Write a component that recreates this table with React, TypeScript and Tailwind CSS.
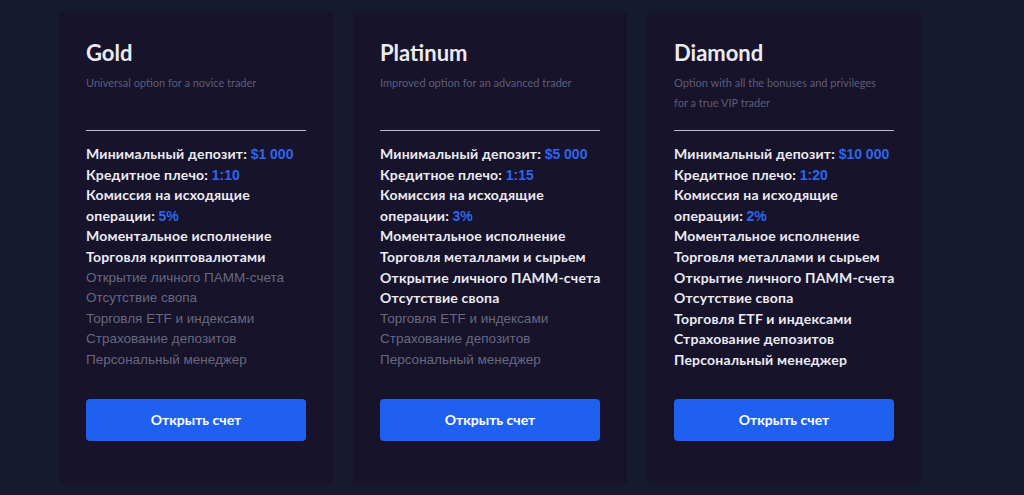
import React from 'react';

type Feature = { label: string; value?: string; active: boolean };

type Plan = {
  name: string;
  subtitle: string[];
  features: Feature[];
};

const plans: Plan[] = [
  {
    name: 'Gold',
    subtitle: ['Universal option for a novice trader'],
    features: [
      { label: 'Минимальный депозит:', value: '$1 000', active: true },
      { label: 'Кредитное плечо:', value: '1:10', active: true },
      { label: 'Комиссия на исходящие\nоперации:', value: '5%', active: true },
      { label: 'Моментальное исполнение', active: true },
      { label: 'Торговля криптовалютами', active: true },
      { label: 'Открытие личного ПАММ-счета', active: false },
      { label: 'Отсутствие свопа', active: false },
      { label: 'Торговля ETF и индексами', active: false },
      { label: 'Страхование депозитов', active: false },
      { label: 'Персональный менеджер', active: false },
    ],
  },
  {
    name: 'Platinum',
    subtitle: ['Improved option for an advanced trader'],
    features: [
      { label: 'Минимальный депозит:', value: '$5 000', active: true },
      { label: 'Кредитное плечо:', value: '1:15', active: true },
      { label: 'Комиссия на исходящие\nоперации:', value: '3%', active: true },
      { label: 'Моментальное исполнение', active: true },
      { label: 'Торговля металлами и сырьем', active: true },
      { label: 'Открытие личного ПАММ-счета', active: true },
      { label: 'Отсутствие свопа', active: true },
      { label: 'Торговля ETF и индексами', active: false },
      { label: 'Страхование депозитов', active: false },
      { label: 'Персональный менеджер', active: false },
    ],
  },
  {
    name: 'Diamond',
    subtitle: ['Option with all the bonuses and privileges', 'for a true VIP trader'],
    features: [
      { label: 'Минимальный депозит:', value: '$10 000', active: true },
      { label: 'Кредитное плечо:', value: '1:20', active: true },
      { label: 'Комиссия на исходящие\nоперации:', value: '2%', active: true },
      { label: 'Моментальное исполнение', active: true },
      { label: 'Торговля металлами и сырьем', active: true },
      { label: 'Открытие личного ПАММ-счета', active: true },
      { label: 'Отсутствие свопа', active: true },
      { label: 'Торговля ETF и индексами', active: true },
      { label: 'Страхование депозитов', active: true },
      { label: 'Персональный менеджер', active: true },
    ],
  },
];

function PlanCard({ plan }: { plan: Plan }) {
  return (
    <div className="w-[274px] h-[471px] bg-[#16132b] px-[27px] pt-[28px] flex flex-col">
      {/* Header */}
      <h2 className="text-[22px] leading-[26px] font-bold text-[#ecebf3] font-['Lato',sans-serif]">
        {plan.name}
      </h2>
      <div className="mt-[7px] h-[57px] text-[11px] leading-[20px] text-[#5e5c78] font-['Lato',sans-serif]">
        {plan.subtitle.map((s) => (
          <div key={s}>{s}</div>
        ))}
      </div>
      <div className="h-px bg-[#b9b8c8] mb-[13px]" />

      {/* Features */}
      <ul className="text-[14px] leading-[20.6px] tracking-[0.2px] font-['Lato',sans-serif]">
        {plan.features.map((f) =>
          f.active ? (
            <li key={f.label} className="font-bold text-[#ecebf3] whitespace-nowrap">
              {f.label.split('\n').map((line, i) => (
                <React.Fragment key={line}>
                  {i > 0 && <br />}
                  <span>{line}</span>
                </React.Fragment>
              ))}{' '}
              {f.value && (
                <span className="text-[#2d66ee] tracking-normal font-['Liberation_Sans',sans-serif] font-bold">
                  {f.value}
                </span>
              )}
            </li>
          ) : (
            <li
              key={f.label}
              className="text-[#68677f] tracking-normal whitespace-nowrap font-['Liberation_Sans',sans-serif] text-[13.5px]"
            >
              {f.label}
            </li>
          )
        )}
      </ul>

      {/* Action */}
      <button className="mt-[28px] h-[42px] w-full rounded-[4px] bg-[#1f60f0] text-white text-[14px] font-bold font-['Lato',sans-serif]">
        Открыть счет
      </button>
    </div>
  );
}

export default function App() {
  return (
    <div className="w-[1024px] h-[495px] bg-[#151a2e] pl-[59px] pt-[12px] flex gap-[20px]">
      {plans.map((p) => (
        <PlanCard key={p.name} plan={p} />
      ))}
    </div>
  );
}
